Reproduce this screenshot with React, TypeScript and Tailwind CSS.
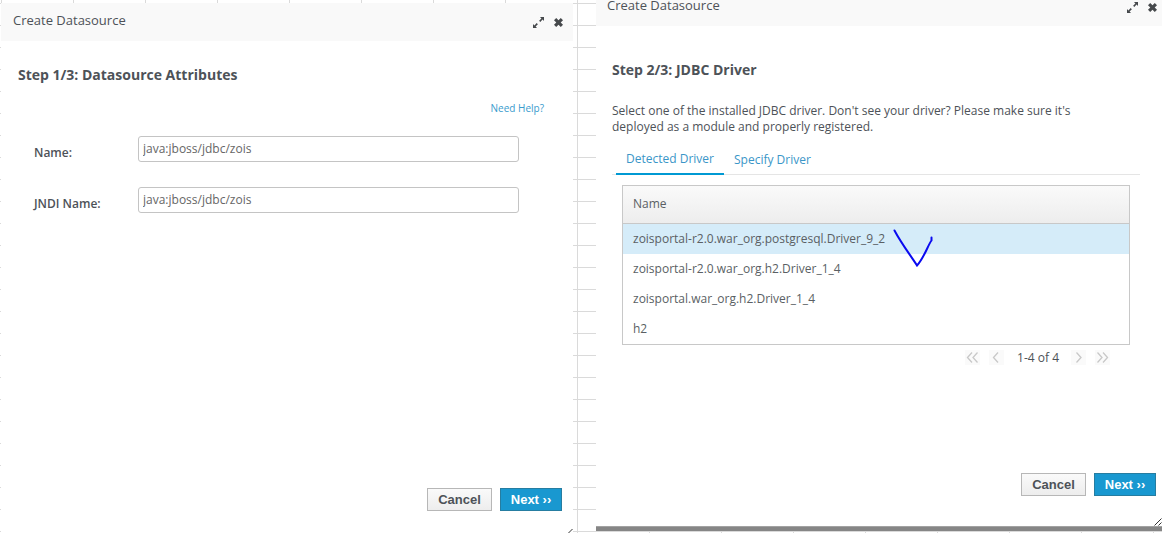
import { useState } from "react";
import type { ReactNode } from "react";

function ExpandIcon() {
  return (
    <svg viewBox="0 0 11 11" className="block size-[11px]" fill="currentColor" aria-hidden="true">
      <path d="M7 0h4v4L9.600 2.600 7.300 4.900 6.100 3.700 8.400 1.400zM0 7l1.400 1.400L3.700 6.100 4.900 7.300 2.600 9.600 4 11H0z" />
    </svg>
  );
}

function CloseIcon() {
  return (
    <svg viewBox="0 0 9 9" className="block size-[9px]" fill="currentColor" aria-hidden="true">
      <path d="M2.200 0 4.500 2.300 6.800 0 9 2.200 6.700 4.500 9 6.800 6.800 9 4.500 6.700 2.200 9 0 6.800 2.300 4.500 0 2.200z" />
    </svg>
  );
}

function WindowControls() {
  return (
    <div className="flex items-center gap-[10px] text-[#46494c]">
      <button type="button" aria-label="Maximize">
        <ExpandIcon />
      </button>
      <button type="button" aria-label="Close">
        <CloseIcon />
      </button>
    </div>
  );
}

function DialogButtons() {
  return (
    <div className="flex justify-end gap-2 font-['Liberation_Sans',sans-serif] text-[13px] leading-[21px] font-bold">
      <button
        type="button"
        className="w-[65px] border border-[#b7b7b7] bg-linear-to-b from-[#fafafa] to-[#ededed] text-[#4d5258]"
      >
        Cancel
      </button>
      <button type="button" className="w-[62px] border border-[#267da1] bg-[#1998d0] text-white">
        Next ››
      </button>
    </div>
  );
}

function ResizeGrip({ className, path }: { className: string; path: string }) {
  return (
    <svg viewBox="0 0 8 8" className={className} stroke="#333" fill="none" aria-hidden="true">
      <path d={path} />
    </svg>
  );
}

function Field({ id, label, value }: { id: string; label: string; value: string }) {
  return (
    <div className="flex items-start">
      <label htmlFor={id} className="w-[104px] shrink-0 pt-2 text-[12px] leading-[18px] font-semibold">
        {label}
      </label>
      <input
        id={id}
        defaultValue={value}
        className="h-[26px] min-w-0 flex-1 rounded-[3px] border border-[#c4c4c4] bg-white px-1 pb-px text-[12px] text-[#666]"
      />
    </div>
  );
}

function PagerButton({ label, children }: { label: string; children: ReactNode }) {
  return (
    <button type="button" aria-label={label} className="bg-[#fafafa] text-[#c8c8c8]">
      <svg viewBox="0 0 15 15" className="block size-[15px]" fill="none" stroke="currentColor" strokeWidth="1.3" aria-hidden="true">
        {children}
      </svg>
    </button>
  );
}

const drivers = [
  "zoisportal-r2.0.war_org.postgresql.Driver_9_2",
  "zoisportal-r2.0.war_org.h2.Driver_1_4",
  "zoisportal.war_org.h2.Driver_1_4",
  "h2",
];

function AttributesDialog() {
  return (
    <section className="relative mt-[3px] flex min-w-0 flex-[572] flex-col bg-white">
      <header className="flex h-[38px] items-start justify-between bg-[#f9f9f9] pt-2 pr-[10px] pl-3">
        <h1 className="text-[13px] leading-[18px]">Create Datasource</h1>
        <div className="pt-[6px]">
          <WindowControls />
        </div>
      </header>
      <div className="flex flex-1 flex-col px-[17px] pt-6">
        <h2 className="text-[14px] leading-5 font-bold">Step 1/3: Datasource Attributes</h2>
        <div className="mt-[15px] pr-3 text-right text-[10px] leading-4">
          <a href="#help" className="text-[#3a9bcd]">Need Help?</a>
        </div>
        <form className="mt-5 flex flex-col gap-[25px] pr-[37px] pl-4">
          <Field id="name" label="Name:" value="java:jboss/jdbc/zois" />
          <Field id="jndi" label="JNDI Name:" value="java:jboss/jdbc/zois" />
        </form>
      </div>
      <footer className="pr-[11px] pb-[22px]">
        <DialogButtons />
      </footer>
      <ResizeGrip className="absolute right-0 bottom-0 size-2" path="M3.500 8 7.500 4" />
    </section>
  );
}

function DriverDialog() {
  const [selected, setSelected] = useState(0);
  return (
    <section className="relative mb-[7px] flex min-w-0 flex-[566] flex-col bg-white shadow-[0_1px_0_#a2a2a2,0_5px_0_#868686]">
      <header className="flex h-[26px] items-start justify-between bg-[#f9f9f9] pr-[5px] pl-[11px]">
        <h1 className="text-[13px] leading-[11px]">Create Datasource</h1>
        <div className="pt-[2px]">
          <WindowControls />
        </div>
      </header>
      <div className="flex flex-1 flex-col px-4 pt-[34px]">
        <h2 className="text-[14px] leading-5 font-bold">Step 2/3: JDBC Driver</h2>
        <p className="mt-[23px] max-w-[500px] text-[12px] leading-4">
          Select one of the installed JDBC driver. Don't see your driver? Please make sure it's deployed as a module and
          properly registered.
        </p>
        <div role="tablist" className="mr-[6px] mt-[9px] flex border-b border-[#e5e5e5] pl-1 text-[12px] text-[#3a96c8]">
          <button
            type="button"
            role="tab"
            aria-selected="true"
            className="-mb-px border-b-2 border-[#0099d3] px-[10px] pt-[7px] pb-[6px] leading-4"
          >
            Detected Driver
          </button>
          <button type="button" role="tab" aria-selected="false" className="px-[10px] pt-2 pb-[6px] leading-4">
            Specify Driver
          </button>
        </div>
        <div className="mt-[10px] mr-4 ml-[10px]">
          <div className="relative border border-[#c8c8c8]">
            <table className="w-full border-separate border-spacing-0 text-left text-[12px] leading-4 text-[#5a5f64]">
              <thead>
                <tr>
                  <th className="h-[38px] border-b border-[#c8c8c8] bg-linear-to-b from-[#fafafa] to-[#ededed] px-[10px] pb-[2px] font-normal">
                    Name
                  </th>
                </tr>
              </thead>
              <tbody>
                {drivers.map((driver, index) => (
                  <tr
                    key={driver}
                    onClick={() => setSelected(index)}
                    className={index === selected ? "h-[30px] bg-[#d5ecf9]" : "h-[30px] bg-white"}
                  >
                    <td className="px-[10px]">{driver}</td>
                  </tr>
                ))}
              </tbody>
            </table>
            <svg
              viewBox="0 0 40 38"
              className="absolute top-[43px] left-[270px] h-[38px] w-10"
              fill="none"
              stroke="#0a0af0"
              strokeWidth="2"
              strokeLinecap="round"
              aria-hidden="true"
            >
              <path d="M1.500 1.500C8 14 18 27 24 36.500C31 29 35 16 38.500 11.500V8.500" />
            </svg>
          </div>
          <div className="mt-1 mr-5 flex items-start justify-end gap-[9px] pt-px text-[12px] leading-4">
            <PagerButton label="First page">
              <path d="M7 2.500 2.500 7.500 7 12.500M12.500 2.500 8 7.500l4.500 5" />
            </PagerButton>
            <PagerButton label="Previous page">
              <path d="M9 2.500 4.500 7.500 9 12.500" />
            </PagerButton>
            <span className="pr-[3px] pl-1">1-4 of 4</span>
            <PagerButton label="Next page">
              <path d="M5.500 2.500 10 7.500 5.500 12.500" />
            </PagerButton>
            <PagerButton label="Last page">
              <path d="M2.500 2.500 7 7.500 2.500 12.500M8 2.500l4.500 5-4.500 5" />
            </PagerButton>
          </div>
        </div>
      </div>
      <footer className="pr-[6px] pb-[30px]">
        <DialogButtons />
      </footer>
      <ResizeGrip className="absolute right-0 bottom-0 size-2" path="M.5 7.500 7.500.5M4.500 7.500l3-3" />
    </section>
  );
}

export default function App() {
  return (
    <main className="flex min-h-screen gap-[23px] bg-white bg-[linear-gradient(to_right,#dadada_1px,transparent_1px),linear-gradient(to_bottom,#dadada_1px,transparent_1px)] bg-[size:72px_22px] bg-[position:1px_3px] pl-px font-['Open_Sans',sans-serif] text-[#4d5258]">
      <AttributesDialog />
      <DriverDialog />
    </main>
  );
}
